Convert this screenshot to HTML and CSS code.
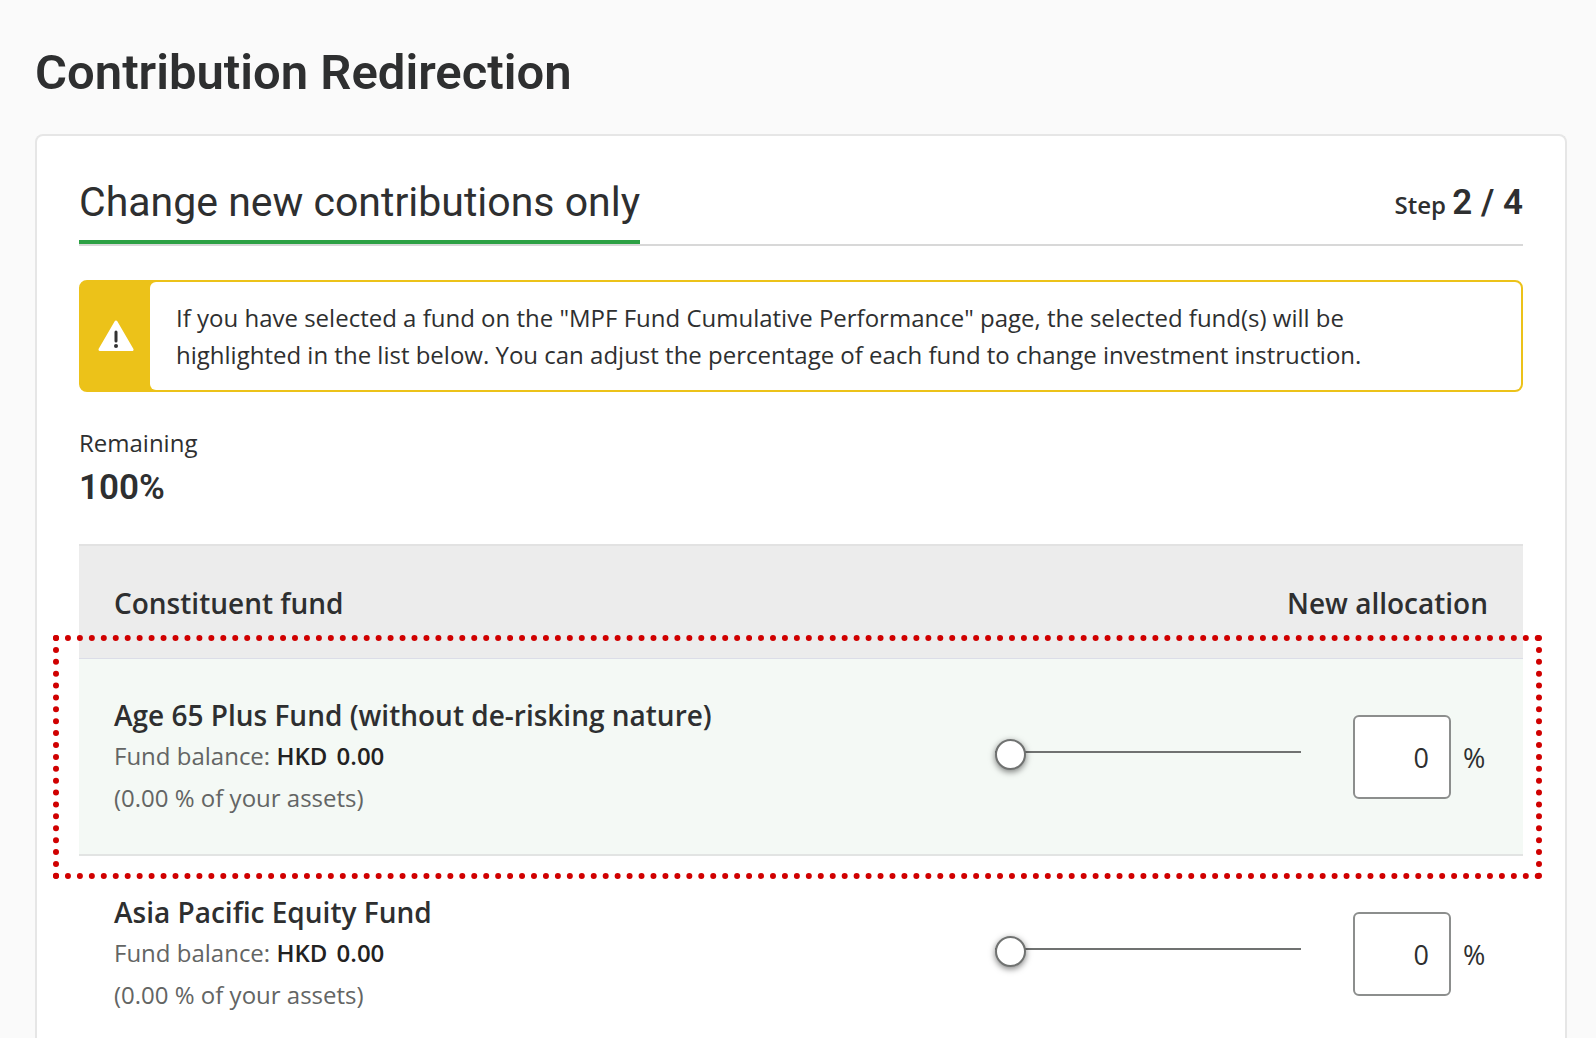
FILE: index.html
```html
<!DOCTYPE html>
<html lang="en">
<head>
<meta charset="utf-8">
<meta name="viewport" content="width=device-width, initial-scale=1">
<title>Contribution Redirection</title>
<link rel="stylesheet" href="styles.css">
</head>
<body>
<main class="page">
  <h1 class="page-title">Contribution Redirection</h1>
  <section class="card">
    <header class="card-header">
      <h2 class="card-title">Change new contributions only</h2>
      <p class="step">Step <strong class="step-count">2 / 4</strong></p>
    </header>

    <div class="notice" role="note">
      <div class="notice-icon">
        <svg width="36" height="32" viewBox="0 0 36 32" aria-hidden="true">
          <path d="M18 2 34 29.600H2Z" fill="#fff" stroke="#fff" stroke-width="3" stroke-linejoin="round"/>
          <path d="M18 12v9" stroke="#333" stroke-width="3" stroke-linecap="round"/>
          <circle cx="18" cy="26" r="2" fill="#333"/>
        </svg>
      </div>
      <p class="notice-text">If you have selected a fund on the "MPF Fund Cumulative Performance" page, the selected fund(s) will be highlighted in the list below. You can adjust the percentage of each fund to change investment instruction.</p>
    </div>

    <div class="remaining">
      <p class="remaining-label">Remaining</p>
      <p class="remaining-value">100%</p>
    </div>

    <table class="funds">
      <thead>
        <tr>
          <th scope="col">Constituent fund</th>
          <th scope="col" colspan="2" class="col-allocation">New allocation</th>
        </tr>
      </thead>
      <tbody>
        <tr class="is-selected">
          <td class="fund">
            <h3 class="fund-name">Age 65 Plus Fund (without de-risking nature)</h3>
            <p class="fund-detail">Fund balance: <strong class="currency">HKD</strong> <strong>0.00</strong></p>
            <p class="fund-detail">(0.00 % of your assets)</p>
          </td>
          <td class="slider-cell"><input class="slider" type="range" min="0" max="100" value="0" aria-label="Age 65 Plus Fund allocation"></td>
          <td class="amount-cell">
            <div class="amount">
              <input class="amount-input" id="age65" type="text" inputmode="numeric" value="0" aria-label="Age 65 Plus Fund percentage">
              <label for="age65">%</label>
            </div>
          </td>
        </tr>
        <tr>
          <td class="fund">
            <h3 class="fund-name">Asia Pacific Equity Fund</h3>
            <p class="fund-detail">Fund balance: <strong class="currency">HKD</strong> <strong>0.00</strong></p>
            <p class="fund-detail">(0.00 % of your assets)</p>
          </td>
          <td class="slider-cell"><input class="slider" type="range" min="0" max="100" value="0" aria-label="Asia Pacific Equity Fund allocation"></td>
          <td class="amount-cell">
            <div class="amount">
              <input class="amount-input" id="asia" type="text" inputmode="numeric" value="0" aria-label="Asia Pacific Equity Fund percentage">
              <label for="asia">%</label>
            </div>
          </td>
        </tr>
      </tbody>
    </table>
  </section>
</main>
</body>
</html>
```
FILE: styles.css
```css
* {
  box-sizing: border-box;
}

html {
  scrollbar-width: none;
}

body {
  margin: 0;
  background: #fafafa;
  color: #2e2f30;
  font-family: "Open Sans", sans-serif;
  font-size: 24px;
  line-height: 37px;
}

h1, h2, h3, p {
  margin: 0;
}

.page {
  padding: 43px 29px 0 35px;
}

.page-title {
  margin-bottom: 31px;
  font: 600 49px/60px Roboto, sans-serif;
}

.card {
  padding: 34px 42px 0;
  background: #fff;
  border: 2px solid #e6e6e6;
  border-bottom: 0;
  border-radius: 8px 8px 0 0;
}

.card-header {
  display: flex;
  justify-content: space-between;
  align-items: center;
  border-bottom: 2px solid #d8d8d8;
}

.card-title {
  height: 74px;
  border-bottom: 4px solid #2ca144;
  font: 400 41px/64px Roboto, sans-serif;
}

.step {
  padding-bottom: 8px;
  font-weight: 600;
}

.step-count {
  font: 600 35px/40px Roboto, sans-serif;
}

.notice {
  display: flex;
  margin-top: 34px;
  background: #ecc219;
  border: 2px solid #ecc219;
  border-radius: 8px;
}

.notice-icon {
  display: flex;
  flex: 0 0 69px;
  align-items: center;
  justify-content: center;
}

.notice-text {
  flex: 1;
  padding: 17px 120px 17px 26px;
  background: #fff;
  border-radius: 6px;
}

.remaining {
  margin: 32px 0 30px;
}

.remaining-value {
  font: 600 35px/53px Roboto, sans-serif;
}

.funds {
  width: 100%;
  border-collapse: separate;
  border-spacing: 0;
}

.funds th {
  padding: 37px 35px 35px;
  background: #ececec;
  border-top: 2px solid #e2e2e2;
  border-bottom: 1px solid #dcdde8;
  font-size: 28px;
  font-weight: 600;
  line-height: 40px;
  text-align: left;
}

.funds .col-allocation {
  text-align: right;
}

.funds td {
  padding: 36px 0 35px;
  border-bottom: 2px solid #e2e4e3;
}

.funds .fund {
  padding-left: 35px;
}

.fund-name {
  font-size: 28px;
  font-weight: 600;
  line-height: 40px;
}

.fund-detail {
  color: #636564;
  line-height: 42px;
}

.fund-detail strong {
  color: #222;
  font-weight: 600;
}

.currency {
  margin-right: 3px;
}

.slider-cell {
  width: 358px;
}

.slider {
  display: block;
  width: 306px;
  height: 32px;
  margin: 0 0 10px;
  background: none;
  appearance: none;
}

.slider::-webkit-slider-runnable-track {
  height: 2px;
  background: #707271;
}

.slider::-webkit-slider-thumb {
  width: 31px;
  height: 31px;
  margin-top: -12px;
  background: #fff;
  border: 2px solid #707271;
  border-radius: 50%;
  box-shadow: 0 2px 6px rgba(0, 0, 0, 0.5);
  appearance: none;
}

.amount-cell {
  width: 170px;
}

.amount {
  display: flex;
  align-items: center;
  gap: 12px;
  font-size: 27px;
}

.amount-input {
  width: 98px;
  height: 84px;
  padding: 0 20px;
  background: #fff;
  border: 2px solid #8c8e8d;
  border-radius: 6px;
  color: inherit;
  font: inherit;
  text-align: right;
}

.is-selected {
  position: relative;
  background: #f4f9f5;
}

/* Callout frame drawn over the selected fund row */
.is-selected::after {
  position: absolute;
  inset: -24px -19px -23px -26px;
  border: 6px dotted #d00000;
  content: "";
  pointer-events: none;
}
```
